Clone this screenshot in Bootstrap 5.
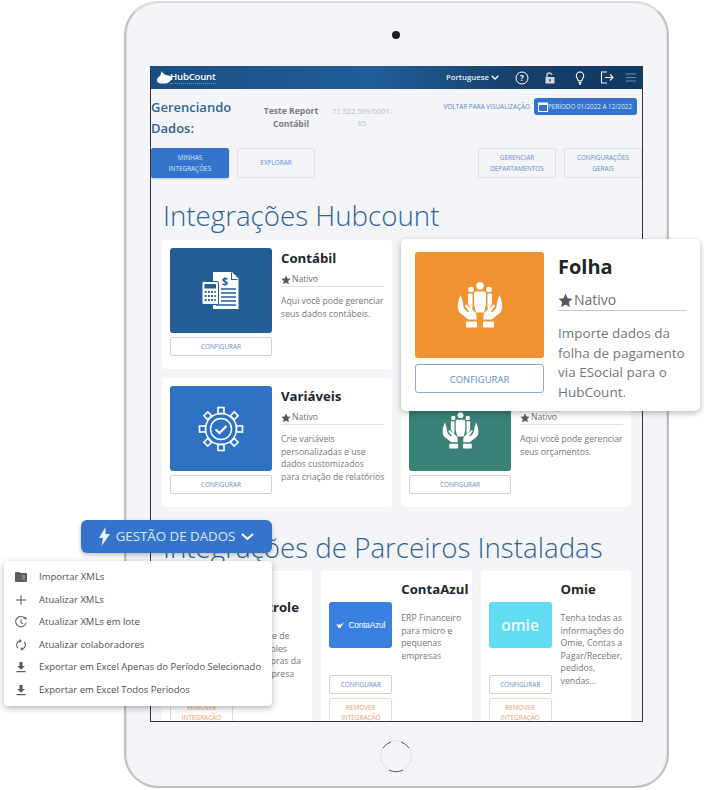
<!DOCTYPE html>
<html lang="pt-BR">
<head>
    <meta charset="UTF-8">
    <meta name="viewport" content="width=device-width, initial-scale=1.0">
    <title>HubCount - Integrações</title>
    <link href="https://cdn.jsdelivr.net/npm/bootstrap@5.3.0/dist/css/bootstrap.min.css" rel="stylesheet">
    <style>
        body {
            font-family: 'Open Sans', 'Noto Sans', sans-serif;
            background-color: #ffffff;
            margin: 0;
            overflow: hidden;
        }
        .stage {
            position: relative;
            width: 704px;
            height: 790px;
            overflow: hidden;
        }
        /* tablet */
        .tablet {
            width: 545px;
            height: 787px;
            margin-left: 124px;
            margin-top: 1px;
            padding: 63px 24px 0 24px;
            background-color: #f3f5f9;
            border: 2px solid #c0c0c0;
            border-top-color: #dcdcdc;
            border-radius: 34px;
            box-shadow: inset 1px 0 0 #e2e2e2, inset -1px 0 0 #e2e2e2;
            position: relative;
        }
        .camera {
            position: absolute;
            left: 266px;
            top: 28px;
            width: 8px;
            height: 8px;
            border-radius: 50%;
            background-color: #1c1f24;
        }
        .home-key {
            position: absolute;
            left: 253px;
            top: 736px;
        }
        .screen {
            width: 493px;
            height: 656px;
            overflow: hidden;
            background-color: #f3f5f9;
            border: 1px solid #33373c;
            border-top: 0;
        }
        /* top bar */
        .topbar {
            height: 23px;
            background: linear-gradient(90deg, #1b4e82 0%, #215f9a 45%, #173f6a 75%, #113a62 100%);
            color: #ffffff;
            padding: 0 6px 0 6px;
        }
        .logo-name {
            font-size: 9.6px;
            font-weight: 600;
            line-height: 10px;
            letter-spacing: -.2px;
            border-bottom: 1px dotted rgba(255, 255, 255, .35);
            padding-bottom: 1px;
            margin-left: -2px;
        }
        .lang {
            font-size: 7.8px;
            font-weight: 600;
            color: #e8eef5;
            margin-right: 16px;
        }
        .top-icons svg {
            display: block;
        }
        .gap-lock { margin-left: 15px; }
        .gap-bulb { margin-left: 19px; }
        .gap-exit { margin-left: 15px; }
        .gap-menu { margin-left: 12px; }
        /* header of the page */
        .head-row {
            height: 59px;
            padding-top: 8px;
        }
        .head-title {
            width: 105px;
            font-size: 13px;
            font-weight: 600;
            line-height: 20.5px;
            color: #2f6496;
        }
        .head-company {
            width: 70px;
            margin-top: 8px;
            font-size: 8.6px;
            font-weight: 700;
            line-height: 12.5px;
            color: #777d84;
            text-align: center;
        }
        .head-cnpj {
            width: 72px;
            margin-top: 8px;
            font-size: 7.4px;
            line-height: 12px;
            color: #b8bdc3;
            text-align: center;
        }
        .back-link {
            font-size: 6.4px;
            color: #5b8bc8;
            margin-top: 5px;
            margin-right: 4px;
        }
        .period-btn {
            width: 103px;
            height: 17px;
            padding: 0 0 0 4px;
            margin-top: 1px;
            margin-right: 5px;
            font-size: 6.3px;
            line-height: 17px;
            color: #dfe9f7;
            background-color: #3474cc;
            border: 0;
            border-radius: 3px;
        }
        .tab-btn {
            width: 78px;
            height: 30px;
            padding: 0;
            font-size: 6.4px;
            line-height: 11.5px;
            color: #5f8fcb;
            background-color: #f3f5f9;
            border: 1px solid #dde2e9;
            border-radius: 2px;
        }
        .tab-btn.on {
            color: #dfe9f7;
            background-color: #3474cc;
            border-color: #3474cc;
            box-shadow: 0 1px 2px rgba(0, 0, 0, .2);
        }
        .section-title {
            font-size: 27.7px;
            font-weight: 300;
            line-height: 38px;
            color: #2f6496;
            margin: 0;
            padding-left: 12px;
            white-space: nowrap;
        }
        .first-title { margin-top: 18px; }
        .second-title { margin-top: 21px; }
        /* cards */
        .grid-two {
            display: grid;
            grid-template-columns: 230px 230px;
            gap: 9px;
            padding-left: 11px;
            margin-top: 6px;
        }
        .grid-three {
            display: grid;
            grid-template-columns: repeat(3, 150.3px);
            gap: 9px;
            padding-left: 11px;
            margin-top: 5px;
        }
        .hub-card {
            background-color: #ffffff;
            border-radius: 3px;
            padding: 8px;
            gap: 9px;
            height: 129px;
        }
        .grid-three .hub-card {
            height: 190px;
            padding-top: 8px;
        }
        .side-col {
            width: 102px;
            flex: none;
        }
        .grid-three .side-col {
            width: 63px;
            padding-top: 23px;
        }
        .tile {
            height: 85px;
            border-radius: 3px;
            color: #ffffff;
        }
        .grid-three .tile {
            height: 46px;
        }
        .tile-contabil { background-color: #245d98; }
        .tile-variaveis { background-color: #2f72c3; }
        .tile-folha { background-color: #f09433; }
        .tile-green { background-color: #3a8177; }
        .tile-azul { background-color: #3a80e0; }
        .tile-omie { background-color: #62dcf0; }
        .azul-name {
            font-family: 'Liberation Sans', sans-serif;
            font-size: 8.4px;
            letter-spacing: -.2px;
        }
        .omie-name {
            font-size: 15.5px;
            font-weight: 600;
            line-height: 17px;
            color: #eefbfe;
        }
        .hub-btn {
            display: block;
            width: 100%;
            height: 19px;
            padding: 0;
            margin-top: 4px;
            font-size: 6.4px;
            line-height: 17px;
            color: #5f8fcb;
            background-color: #ffffff;
            border: 1px solid #ccd3dc;
            border-radius: 2px;
        }
        .grid-three .hub-btn {
            margin-top: 27px;
        }
        .grid-three .hub-btn.remove {
            height: 30px;
            margin-top: 4px;
            line-height: 10px;
            color: #e8a26a;
            border-color: #f0d9c6;
        }
        .text-col {
            flex: 1;
            min-width: 0;
        }
        .card-name {
            font-size: 13.2px;
            font-weight: 700;
            line-height: 20px;
            color: #22262a;
            margin: 0;
        }
        .card-name-low {
            margin-top: 18px;
        }
        .native {
            font-size: 8.6px;
            line-height: 11px;
            color: #6c7177;
            padding-top: 6px;
            padding-bottom: 1px;
            border-bottom: 1px solid #dfe1e4;
            gap: 1px;
        }
        .native svg {
            color: #55595f;
        }
        .card-desc {
            font-size: 8.7px;
            line-height: 12.5px;
            color: #73787e;
            margin: 8px 0 0 0;
            white-space: nowrap;
        }
        .grid-three .card-desc {
            margin-top: 13px;
        }
        /* Folha, raised over the grid */
        .folha-pop {
            position: absolute;
            left: 401px;
            top: 239px;
            width: 299px;
            height: 172px;
            padding: 13px 13px 0 14px;
            gap: 14px;
            background-color: #ffffff;
            border-radius: 5px;
            box-shadow: 0 2px 6px rgba(0, 0, 0, .28);
        }
        .folha-pop .side-col {
            width: 129px;
        }
        .folha-pop .tile {
            height: 106px;
        }
        .folha-pop .hub-btn {
            height: 29px;
            margin-top: 6px;
            padding-top: 1px;
            font-size: 9.5px;
            line-height: 27px;
            border-color: #8fa9c9;
            border-radius: 3px;
        }
        .folha-pop .card-name {
            font-size: 20px;
            line-height: 30px;
        }
        .folha-pop .native {
            font-size: 14px;
            line-height: 16px;
            padding-top: 10px;
            padding-bottom: 2px;
            border-bottom-color: #c5c8cc;
        }
        .folha-pop .card-desc {
            font-size: 13.5px;
            line-height: 19.5px;
            margin-top: 13px;
        }
        /* Gestao de dados button and its menu */
        .data-btn {
            position: absolute;
            left: 81px;
            top: 520px;
            width: 191px;
            height: 33px;
            padding: 0;
            gap: 6px;
            font-size: 13.3px;
            color: #dbe6f5;
            background-color: #3474cc;
            border: 0;
            border-radius: 6px;
            box-shadow: 0 2px 4px rgba(0, 0, 0, .25);
        }
        .data-menu {
            position: absolute;
            left: 4px;
            top: 561px;
            width: 268px;
            height: 145px;
            padding: 5px 0 0 0;
            margin: 0;
            min-width: 0;
            border: 0;
            border-radius: 4px;
            box-shadow: 0 2px 6px rgba(0, 0, 0, .3);
        }
        .data-menu .dropdown-item {
            height: 22.5px;
            padding: 0 0 0 11px;
            gap: 12px;
            font-size: 9.5px;
            color: #4c5157;
            white-space: nowrap;
        }
        .menu-ico {
            width: 12px;
            flex: none;
        }
    </style>
</head>
<body>
    <svg width="0" height="0" class="d-block">
        <defs>
            <symbol id="star" viewBox="0 0 24 24">
                <path fill="currentColor" d="M12 1l3.300 7.300 7.900.8-5.900 5.300 1.700 7.900L12 18.300l-7 4 1.700-7.900L.8 9.100l7.900-.8z"/>
            </symbol>
            <symbol id="care" viewBox="0 0 46 46">
                <g fill="currentColor">
                    <circle cx="23" cy="4" r="3.700"/>
                    <circle cx="14" cy="7.500" r="2.800"/>
                    <circle cx="32" cy="7.500" r="2.800"/>
                    <path d="M18.700 9.500h8.600q1.700 0 1.700 2v10.500l-2 8.500h-8l-2-8.500v-10.500q0-2 1.700-2z"/>
                    <path d="M11 11.500h4.500v12l-.5 5h-1.500v-3l-2.500-3.500z"/>
                    <path d="M35 11.500h-4.500v12l.5 5h1.500v-3l2.500-3.500z"/>
                    <path d="M3.500 13c-2.500 6-4 13-1 17.500l9 7h8v-4c0-2-1-3.500-3-5l-6.500-5.500c-1.500-1-2.800.5-1.500 2l3.500 4.500-1 1-4-4c-1-3-1-9-3.500-13.500z"/>
                    <path d="M42.500 13c2.500 6 4 13 1 17.500l-9 7h-8v-4c0-2 1-3.500 3-5l6.500-5.500c1.500-1 2.800.5 1.500 2l-3.500 4.500 1 1 4-4c1-3 1-9 3.500-13.500z"/>
                    <rect x="9" y="39.500" width="11" height="6" rx="1"/>
                    <rect x="26" y="39.500" width="11" height="6" rx="1"/>
                </g>
            </symbol>
            <symbol id="download" viewBox="0 0 12 12">
                <path fill="#55595f" d="M4.500 1h3v4h2.300L6 8.700 2.200 5h2.300z"/>
                <rect x="1.500" y="10" width="9" height="1.200" fill="#55595f"/>
            </symbol>
        </defs>
    </svg>

    <div class="stage">
        <div class="tablet">
            <div class="camera"></div>
            <div class="screen">
                <div class="topbar d-flex align-items-center">
                    <svg width="15" height="13" viewBox="0 0 15 13"><path fill="#fff" d="M5 0c0 2 2 2.500 3.500 4 2 .3 4 .5 6.500 2.300-.5 3-2.500 5.700-6 6.200H4C1.500 12.500 0 11 0 9c0-2.500 2.500-3 3.500-5C4 3 4 1 5 0z"/></svg>
                    <span class="logo-name">HubCount</span>
                    <span class="ms-auto lang">Portuguese
                        <svg width="8" height="5" viewBox="0 0 8 5"><path fill="none" stroke="#fff" stroke-width="1.300" d="M.7.8L4 4 7.300.8"/></svg>
                    </span>
                    <div class="top-icons d-flex align-items-center">
                        <svg width="14" height="14" viewBox="0 0 14 14"><circle cx="7" cy="7" r="6" fill="none" stroke="#fff" stroke-width="1"/><text x="7" y="9.800" font-size="8" font-weight="700" fill="#fff" text-anchor="middle" font-family="Open Sans">?</text></svg>
                        <svg width="12" height="12" viewBox="0 0 12 12" class="gap-lock"><path fill="none" stroke="#ccd6e2" stroke-width="1.300" d="M3 5V3.200C3 1.700 4.200 1 5.400 1s2.300.7 2.500 2"/><rect x="1.500" y="5" width="9" height="6.500" rx=".6" fill="#ccd6e2"/><rect x="5.300" y="7.200" width="1.500" height="2.300" fill="#173f6a"/></svg>
                        <svg width="10" height="14" viewBox="0 0 10 14" class="gap-bulb"><path fill="none" stroke="#fff" stroke-width="1.100" d="M5 1a3.700 3.700 0 0 0-3.700 3.700c0 2 1.700 3.100 2 5.100h3.400c.3-2 2-3.100 2-5.100A3.700 3.700 0 0 0 5 1z"/><path stroke="#fff" stroke-width="1.300" d="M3.500 11.300h3M4 13h2"/></svg>
                        <svg width="14" height="13" viewBox="0 0 14 13" class="gap-exit"><path fill="none" stroke="#e8eef5" stroke-width="1.100" d="M7 1H1.500v11H7M5 6.500h8M10 3.500l3 3-3 3"/></svg>
                        <svg width="10" height="9" viewBox="0 0 10 9" class="gap-menu"><path stroke="#6f8cab" stroke-width="1" d="M0 1h10M0 4.500h10M0 8h10"/></svg>
                    </div>
                </div>

                <div class="head-row d-flex">
                    <div class="head-title">Gerenciando Dados:</div>
                    <div class="head-company">Teste Report Contábil</div>
                    <div class="head-cnpj">71.522.569/0001-<br>65</div>
                    <div class="ms-auto back-link">VOLTAR PARA VISUALIZAÇÃO</div>
                    <button type="button" class="btn period-btn d-flex align-items-center">
                        <svg width="10" height="10" viewBox="0 0 10 10"><rect x=".5" y="1" width="9" height="8.500" fill="none" stroke="#fff" stroke-width="1"/><rect x=".5" y="1" width="9" height="2" fill="#fff"/></svg>
                        PERÍODO 01/2022 A 12/2022
                    </button>
                </div>

                <div class="d-flex gap-2">
                    <button type="button" class="btn tab-btn on">MINHAS<br>INTEGRAÇÕES</button>
                    <button type="button" class="btn tab-btn">EXPLORAR</button>
                    <button type="button" class="btn tab-btn ms-auto">GERENCIAR<br>DEPARTAMENTOS</button>
                    <button type="button" class="btn tab-btn">CONFIGURAÇÕES<br>GERAIS</button>
                </div>

                <h2 class="section-title first-title">Integrações Hubcount</h2>

                <div class="grid-two">
                    <div class="hub-card d-flex">
                        <div class="side-col">
                            <div class="tile tile-contabil d-flex align-items-center justify-content-center">
                                <svg width="38" height="37" viewBox="0 0 38 37">
                                    <path fill="#fff" d="M11 0h19l6.500 6.500V37H11z"/>
                                    <path fill="#245d98" d="M30 .8v6.200h6.200l-1.200 1H29V.8z"/>
                                    <path stroke="#245d98" stroke-width="1.400" d="M19 17h15M19 21h15M19 25h15M19 29h15M14 33h20"/>
                                    <text x="23" y="13" font-size="11" font-weight="700" fill="#245d98" text-anchor="middle" font-family="Open Sans">$</text>
                                    <rect x="0" y="9.500" width="16.500" height="23" rx="1.500" fill="#fff" stroke="#245d98" stroke-width="1"/>
                                    <rect x="2.500" y="12" width="11.500" height="4.500" fill="#245d98"/>
                                    <path stroke="#245d98" stroke-width="1.800" stroke-dasharray="1.800 1.400" d="M2.800 20h11M2.800 24h11M2.800 28h11"/>
                                </svg>
                            </div>
                            <button type="button" class="btn hub-btn">CONFIGURAR</button>
                        </div>
                        <div class="text-col">
                            <h5 class="card-name">Contábil</h5>
                            <div class="native d-flex align-items-center"><svg width="10" height="10"><use href="#star"/></svg>Nativo</div>
                            <p class="card-desc">Aqui você pode gerenciar<br>seus dados contábeis.</p>
                        </div>
                    </div>
                    <div class="hub-card d-flex"></div>
                    <div class="hub-card d-flex">
                        <div class="side-col">
                            <div class="tile tile-variaveis d-flex align-items-center justify-content-center">
                                <svg width="46" height="46" viewBox="0 0 46 46" fill="none" stroke="#fff">
                                    <circle cx="23" cy="23" r="15.500" stroke-width="1.500"/>
                                    <circle cx="23" cy="23" r="10.500" stroke-width="1.500"/>
                                    <path stroke-width="2.200" d="M17.500 23.500l4 3.500 7-7"/>
                                    <g fill="#2f72c3" stroke-width="1.600">
                                        <rect x="20" y="1.500" width="6" height="6"/>
                                        <rect x="20" y="38.500" width="6" height="6"/>
                                        <rect x="1.500" y="20" width="6" height="6"/>
                                        <rect x="38.500" y="20" width="6" height="6"/>
                                        <rect x="7" y="7" width="5.500" height="5.500" transform="rotate(45 9.750 9.750)"/>
                                        <rect x="33.500" y="7" width="5.500" height="5.500" transform="rotate(45 36.250 9.750)"/>
                                        <rect x="7" y="33.500" width="5.500" height="5.500" transform="rotate(45 9.750 36.250)"/>
                                        <rect x="33.500" y="33.500" width="5.500" height="5.500" transform="rotate(45 36.250 36.250)"/>
                                    </g>
                                </svg>
                            </div>
                            <button type="button" class="btn hub-btn">CONFIGURAR</button>
                        </div>
                        <div class="text-col">
                            <h5 class="card-name">Variáveis</h5>
                            <div class="native d-flex align-items-center"><svg width="10" height="10"><use href="#star"/></svg>Nativo</div>
                            <p class="card-desc">Crie variáveis<br>personalizadas e use<br>dados customizados<br>para criação de relatórios</p>
                        </div>
                    </div>
                    <div class="hub-card d-flex">
                        <div class="side-col">
                            <div class="tile tile-green d-flex align-items-center justify-content-center">
                                <svg width="37" height="37" class="mt-1"><use href="#care"/></svg>
                            </div>
                            <button type="button" class="btn hub-btn">CONFIGURAR</button>
                        </div>
                        <div class="text-col">
                            <h5 class="card-name">Orçamento</h5>
                            <div class="native d-flex align-items-center"><svg width="10" height="10"><use href="#star"/></svg>Nativo</div>
                            <p class="card-desc">Aqui você pode gerenciar<br>seus orçamentos.</p>
                        </div>
                    </div>
                </div>

                <h2 class="section-title second-title">Integrações de Parceiros Instaladas</h2>

                <div class="grid-three">
                    <div class="hub-card d-flex">
                        <div class="side-col">
                            <div class="tile tile-azul"></div>
                            <button type="button" class="btn hub-btn">CONFIGURAR</button>
                            <button type="button" class="btn hub-btn remove">REMOVER<br>INTEGRAÇÃO</button>
                        </div>
                        <div class="text-col">
                            <h5 class="card-name card-name-low">Controle</h5>
                            <p class="card-desc">Controle de<br>e controles<br>as compras da<br>sua empresa</p>
                        </div>
                    </div>
                    <div class="hub-card d-flex">
                        <div class="side-col">
                            <div class="tile tile-azul d-flex align-items-center justify-content-center gap-1">
                                <svg width="8" height="6" viewBox="0 0 8 6"><path fill="#fff" d="M0 1.500l2.500 4.500h2L8 0 4 3.200 3.300 1.800 2 3z"/></svg>
                                <span class="azul-name">ContaAzul</span>
                            </div>
                            <button type="button" class="btn hub-btn">CONFIGURAR</button>
                            <button type="button" class="btn hub-btn remove">REMOVER<br>INTEGRAÇÃO</button>
                        </div>
                        <div class="text-col">
                            <h5 class="card-name">ContaAzul</h5>
                            <p class="card-desc">ERP Financeiro<br>para micro e<br>pequenas<br>empresas</p>
                        </div>
                    </div>
                    <div class="hub-card d-flex">
                        <div class="side-col">
                            <div class="tile tile-omie d-flex align-items-center justify-content-center">
                                <span class="omie-name">omie</span>
                            </div>
                            <button type="button" class="btn hub-btn">CONFIGURAR</button>
                            <button type="button" class="btn hub-btn remove">REMOVER<br>INTEGRAÇÃO</button>
                        </div>
                        <div class="text-col">
                            <h5 class="card-name">Omie</h5>
                            <p class="card-desc">Tenha todas as<br>informações do<br>Omie, Contas a<br>Pagar/Receber,<br>pedidos,<br>vendas...</p>
                        </div>
                    </div>
                </div>
            </div>
            <svg class="home-key" width="34" height="34" viewBox="0 0 34 34" fill="none">
                <circle cx="17" cy="17" r="15.500" stroke="#dfe2e6" stroke-width="1"/>
                <path stroke="#5c6066" stroke-width="1" d="M4 9a15.500 15.500 0 0 1 8-6M22 3a15.500 15.500 0 0 1 8 6M10 31a15.500 15.500 0 0 0 14 0"/>
            </svg>
        </div>

        <div class="folha-pop d-flex">
            <div class="side-col">
                <div class="tile tile-folha d-flex align-items-center justify-content-center">
                    <svg width="46" height="46"><use href="#care"/></svg>
                </div>
                <button type="button" class="btn hub-btn">CONFIGURAR</button>
            </div>
            <div class="text-col">
                <h5 class="card-name">Folha</h5>
                <div class="native d-flex align-items-center"><svg width="15" height="15"><use href="#star"/></svg>Nativo</div>
                <p class="card-desc">Importe dados da<br>folha de pagamento<br>via ESocial para o<br>HubCount.</p>
            </div>
        </div>

        <button type="button" class="btn data-btn d-flex align-items-center justify-content-center">
            <svg width="11" height="19" viewBox="0 0 11 19"><path fill="#eaf1fa" d="M6.500 0L0 11h4L2.500 19 11 7H6.500z"/></svg>
            GESTÃO DE DADOS
            <svg width="13" height="8" viewBox="0 0 13 8"><path fill="none" stroke="#fff" stroke-width="2" d="M1 1l5.500 5L12 1"/></svg>
        </button>

        <ul class="dropdown-menu show data-menu list-unstyled">
            <li><a class="dropdown-item d-flex align-items-center" href="#"><svg class="menu-ico" height="10" viewBox="0 0 12 10"><path fill="#5a5e64" d="M0 1q0-1 1-1h3.500l1 1H11q1 0 1 1v7q0 1-1 1H1q-1 0-1-1z"/><rect x="7.500" y="3" width="2.500" height="4.500" fill="#8b8f95"/></svg>Importar XMLs</a></li>
            <li><a class="dropdown-item d-flex align-items-center" href="#"><svg class="menu-ico" height="10" viewBox="0 0 12 10"><path stroke="#55595f" stroke-width="1" d="M6 0v10M1 5h10"/></svg>Atualizar XMLs</a></li>
            <li><a class="dropdown-item d-flex align-items-center" href="#"><svg class="menu-ico" height="12" viewBox="0 0 12 12" fill="none"><path stroke="#6b6f75" stroke-width="1.200" d="M10.500 3.300A5.200 5.200 0 1 0 11 6.500M6 3.500V6.500l2 1.300"/><path fill="#6b6f75" d="M8.500 1h3v3z"/></svg>Atualizar XMLs em lote</a></li>
            <li><a class="dropdown-item d-flex align-items-center" href="#"><svg class="menu-ico" height="12" viewBox="0 0 12 12" fill="none"><path stroke="#55595f" stroke-width="1.100" d="M2.800 9A4.200 4.200 0 0 1 4.500 2M9.200 3A4.200 4.200 0 0 1 7.500 10"/><path fill="#55595f" d="M4.300 0v4L7 2zM7.700 12V8L5 10z"/></svg>Atualizar colaboradores</a></li>
            <li><a class="dropdown-item d-flex align-items-center" href="#"><svg class="menu-ico" height="12"><use href="#download"/></svg>Exportar em Excel Apenas do Período Selecionado</a></li>
            <li><a class="dropdown-item d-flex align-items-center" href="#"><svg class="menu-ico" height="12"><use href="#download"/></svg>Exportar em Excel Todos Períodos</a></li>
        </ul>
    </div>

    <script src="https://cdn.jsdelivr.net/npm/bootstrap@5.3.0/dist/js/bootstrap.bundle.min.js"></script>
</body>
</html>
